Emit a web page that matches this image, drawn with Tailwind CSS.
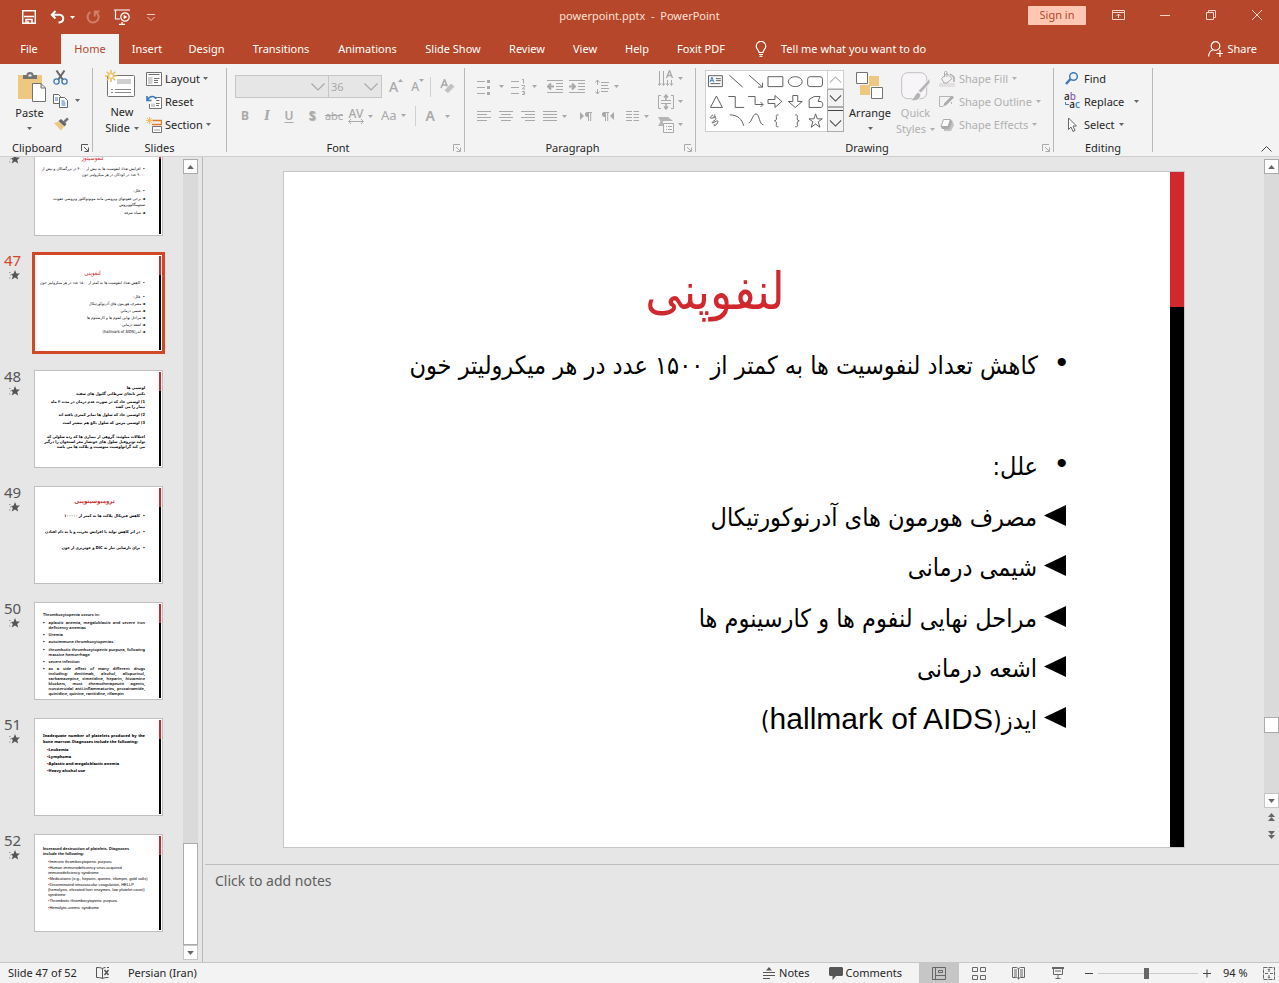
<!DOCTYPE html>
<html lang="en">
<head>
<meta charset="utf-8">
<title>powerpoint.pptx - PowerPoint</title>
<script src="https://cdn.jsdelivr.net/npm/@tailwindcss/browser@4"></script>
</head>
<body class="h-screen flex flex-col overflow-hidden bg-[#e6e6e6] font-['Noto_Sans','Open_Sans',sans-serif] text-[11px] leading-4 text-[#262626]">
<svg class="hidden" aria-hidden="true">
  <symbol id="caret" viewBox="0 0 5 3"><path d="M0 0h5L2.5 3z" fill="currentColor"/></symbol>
  <symbol id="launch" viewBox="0 0 8 8"><path d="M.5 7V.5H7M3 3l4 4M7.500 3.500v4h-4" fill="none" stroke="currentColor"/></symbol>
  <symbol id="chev" viewBox="0 0 14 8"><path d="M.5.500 7 7 13.500.500" fill="none" stroke="currentColor" stroke-width="1.200"/></symbol>
  <symbol id="star" viewBox="0 0 11 10"><path d="M6 0l1.400 3.500 3.600.1-2.800 2.300 1 3.700L6 7.500 2.800 9.600l1-3.700L2 4.200l2.700-.6z" fill="currentColor"/><path d="M0 2.500h1.500M1 5h1M0 8h1.500" stroke="#999"/></symbol>
</svg>

<header class="bg-[#b7472a] text-white shrink-0">
  <div class="h-[34px] grid grid-cols-[1fr_auto_1fr] items-center">
    <div class="flex items-center pl-[22px]">
      <button aria-label="Save" class="mr-[14px]"><svg class="w-[14px] h-[14px]" viewBox="0 0 14 14" fill="none" stroke="#fff" stroke-width="1.500"><path d="M.7.700h12.600v12.600H.7zM2 6.500h10M4 13.500V9.500h6v4"/><path d="M6 11v2.500" /></svg></button>
      <button aria-label="Undo" class="mr-[5px]"><svg class="w-[15px] h-[14px]" viewBox="0 0 15 14" fill="none" stroke="#fff" stroke-width="2"><path d="M5.500 1 1.800 4.800l3.700 3.700M2 4.800h7.500c5 0 5.300 7.700-1 7.700"/></svg></button>
      <button aria-label="Undo options" class="mr-[11px]"><svg class="w-[5px] h-[3px]"><use href="#caret"/></svg></button>
      <button aria-label="Repeat" disabled class="mr-[14px]"><svg class="w-[14px] h-[14px]" viewBox="0 0 14 14" fill="none" stroke="#cf7f6a" stroke-width="2"><path d="M4.500 2.200A5.500 5.500 0 1 0 9.500 2.100M8.800 6.500V1.500H13.500"/></svg></button>
      <button aria-label="Start from beginning" class="mr-[17px]"><svg class="w-4 h-4" viewBox="0 0 16 16" fill="none" stroke="#fff" stroke-width="1.200"><path d="M0 1h16M1.500 1v9H6M5 15.400h6M8 13v2"/><circle cx="11" cy="8" r="4.200"/><path d="M9.700 5.800v4.400L13.200 8z" fill="#fff" stroke="none"/></svg></button>
      <button aria-label="Customize quick access"><svg class="w-2 h-[7px]" viewBox="0 0 8 7" fill="none" stroke="#f0cabf"><path d="M0 .5h8M.5 3 4 6.500 7.500 3"/></svg></button>
    </div>
    <h1 class="text-[#fbe0d8] whitespace-pre pb-[2px]">powerpoint.pptx  -  PowerPoint</h1>
    <div class="flex items-center justify-end pr-[17px] pb-1 text-[#fcd9ce]">
      <button class="w-[58px] h-[19px] bg-[#ffc8b5] text-[#b7472a] rounded-[1px] mr-[26px]">Sign in</button>
      <button aria-label="Ribbon display options" class="mr-[35px]"><svg class="w-[13px] h-[10px]" viewBox="0 0 13 10" fill="none" stroke="currentColor"><path d="M.5.500h12v9H.5zM.5 2.500h12M6.500 8V4M4.500 6l2-2 2 2"/></svg></button>
      <button aria-label="Minimize" class="mr-9"><svg class="w-[10px] h-[10px]" viewBox="0 0 10 10" stroke="currentColor"><path d="M0 5.500h10"/></svg></button>
      <button aria-label="Restore" class="mr-9"><svg class="w-[10px] h-[10px]" viewBox="0 0 10 10" fill="none" stroke="currentColor"><path d="M.5 2.500h7v7h-7zM2.500 2.500v-2h7v7h-2"/></svg></button>
      <button aria-label="Close"><svg class="w-[10px] h-[10px]" viewBox="0 0 10 10" stroke="currentColor"><path d="M0 0l10 10M10 0 0 10"/></svg></button>
    </div>
  </div>
  <nav class="h-[30px] flex">
    <button class="w-[58px] mr-[3px]">File</button>
    <button class="w-[58px] bg-[#f3f3f3] text-[#b7472a]">Home</button>
    <button class="w-14">Insert</button>
    <button class="w-[63px]">Design</button>
    <button class="w-[86px]">Transitions</button>
    <button class="w-[87px]">Animations</button>
    <button class="w-[84px]">Slide Show</button>
    <button class="w-16">Review</button>
    <button class="w-[52px]">View</button>
    <button class="w-[52px]">Help</button>
    <button class="w-[76px]">Foxit PDF</button>
    <button class="flex items-center gap-[14px] pl-4"><svg class="w-3 h-4" viewBox="0 0 12 16" fill="none" stroke="#fff" stroke-width="1.200"><path d="M4 11.500C4 9 1.200 8 1.200 5.200a4.800 4.800 0 0 1 9.600 0C10.800 8 8 9 8 11.500zM4 13.500h4M4.500 15.300h3"/></svg><span>Tell me what you want to do</span></button>
    <button class="ml-auto mr-[22px] flex items-center gap-1"><svg class="w-[15px] h-4" viewBox="0 0 15 16" fill="none" stroke="#fff" stroke-width="1.200"><circle cx="7.500" cy="5" r="4.300"/><path d="M.7 15.500C.7 11.500 3 9.500 5 8.800M12 9v7M8.500 12.500H15"/></svg>Share</button>
  </nav>
</header>

<section aria-label="Ribbon" class="h-[93px] shrink-0 bg-[#f3f3f3] border-b border-[#cfcfcf] flex pt-1 pb-1">
  <!-- Clipboard -->
  <div class="w-[93px] border-r border-[#b8b8b8] flex flex-col justify-between">
    <div class="flex pl-[14px]">
      <button class="w-[31px] flex flex-col items-center pt-1"><svg class="w-7 h-[31px] ml-1" viewBox="0 0 28 31"><path d="M0 3h24v24H0z" fill="#eec880"/><path d="M5 7V3h3.500a3.500 3 0 0 1 7 0H19v4z" fill="#737373"/><path d="M10.500 2.500h3v2h-3z" fill="#f3f3f3"/><path d="M14.500 11.500h8.500l4.500 4.500v13.500h-13zM23 11.500V16h4.500" fill="#fff" stroke="#737373"/></svg><span class="pt-[2px] leading-4">Paste</span><svg class="w-[5px] h-[3px] mt-[6px] text-[#666]"><use href="#caret"/></svg></button>
      <div class="pl-[8px] flex flex-col text-[#666]">
        <button aria-label="Cut" class="h-[23px] mt-[-2px]"><svg class="w-[15px] h-[15px]" viewBox="0 0 15 15" fill="none"><path d="M3.500.500 10 10M11.500.500 5 10" stroke="#666" stroke-width="2"/><circle cx="3.500" cy="11.500" r="2.600" stroke="#3f7ab8" stroke-width="1.300"/><circle cx="11.500" cy="11.500" r="2.600" stroke="#3f7ab8" stroke-width="1.300"/></svg></button>
        <button aria-label="Copy" class="h-[23px] flex items-center gap-[7px]"><svg class="w-[15px] h-[14px]" viewBox="0 0 15 14" fill="#fff" stroke="#666"><path d="M.5.500h5l2 2v7h-7z"/><path d="M6.500 3.500h5l3 3v7h-8z"/><path d="M2 4h3M2 6h3M8.500 7h3M8.500 9h4M8.500 11h4" stroke="#3f7ab8"/></svg><svg class="w-[5px] h-[3px]"><use href="#caret"/></svg></button>
        <button aria-label="Format painter" class="h-[23px] flex items-center"><svg class="w-4 h-[14px]" viewBox="0 0 16 14"><path d="M1 6l5-1.500 5 5L8 13.500z" fill="#eec880"/><path d="M5.500 4 8 2l5.500 5-2 2.500z" fill="#666"/><path d="M10 4.500l4-4L15.800 2.200l-4 4z" fill="#737373"/></svg></button>
      </div>
    </div>
    <div class="flex items-center h-2 leading-2 pl-3 pr-[3px] justify-between"><span>Clipboard</span><button aria-label="Clipboard options" class="text-[#555]"><svg class="w-2 h-2"><use href="#launch"/></svg></button></div>
  </div>
  <!-- Slides -->
  <div class="w-[134px] border-r border-[#b8b8b8] flex flex-col justify-between">
    <div class="flex pl-[11px]">
      <button class="w-9 flex flex-col items-center pt-[2px]"><svg class="w-[31px] h-7 mr-1" viewBox="0 0 31 28"><rect x="2.500" y="5.500" width="27" height="21" rx="1" fill="#fff" stroke="#737373"/><path d="M12 9h14v5H12z" fill="#d0d0d0"/><path d="M6 19.500h2M10 19.500h16M6 22.500h2M10 22.500h16" stroke="#8a8a8a"/><path d="M6 0v12M0 6h12M1.700 1.700l8.600 8.600M10.300 1.700l-8.600 8.600" stroke="#eec060" stroke-width="1.600"/><circle cx="6" cy="6" r="2.200" fill="#fff" stroke="#eec060"/></svg><span class="mt-[6px] leading-4">New</span><span class="leading-4 flex items-center gap-1 whitespace-nowrap">Slide <svg class="w-[5px] h-[3px] text-[#666]"><use href="#caret"/></svg></span></button>
      <div class="pl-[6px] flex flex-col">
        <button class="h-[23px] mt-[-1px] flex items-center gap-[3px]"><svg class="w-4 h-[14px]" viewBox="0 0 16 14" fill="none" stroke="#737373"><path fill="#fff" d="M.5.500h15v13H.5z"/><path d="M2.500 2.500h11M8 6.500h5.500M8 8.500h4M8 10.500h4"/><path d="M2 5h4.500v7H2z" fill="#d0d0d0" stroke="none"/></svg>Layout<svg class="w-[5px] h-[3px] text-[#666]"><use href="#caret"/></svg></button>
        <button class="h-[23px] flex items-center gap-[3px]"><svg class="w-4 h-[14px]" viewBox="0 0 16 14" fill="none" stroke="#737373"><path d="M9 2.500h6.500v11h-12V9" fill="#fff"/><path d="M10 5.500h3.500M10 8.500h3.500M10 10.500h3"/><path d="M5 8.500h4V12H5z" fill="#d0d0d0" stroke="none"/><path d="M1 1v4.500h4.500M1.500 5C4 .5 8.500.500 10 4" stroke="#3f7ab8" stroke-width="1.700"/></svg>Reset</button>
        <button class="h-[23px] flex items-center gap-[3px]"><svg class="w-4 h-4" viewBox="0 0 16 16" fill="none"><path d="M6 3.500h9.500v4H6" stroke="#e07b28" stroke-width="1.300"/><path d="M6.500 9.500h9v6h-9z" fill="#fff" stroke="#737373"/><path d="M8 12h6v2H8z" fill="#d0d0d0"/><path d="M3.500 0v7M0 3.500h7M1 1l5 5M6 1 1 6" stroke="#eec060"/></svg>Section<svg class="w-[5px] h-[3px] text-[#666]"><use href="#caret"/></svg></button>
      </div>
    </div>
    <div class="h-2 leading-2 text-center">Slides</div>
  </div>
  <!-- Font -->
  <div class="w-[238px] border-r border-[#b8b8b8] flex flex-col justify-between text-[#a9a9a9]">
    <div class="pt-[7px] pl-2">
      <div class="h-[23px] flex items-center">
        <div class="relative w-[94px] h-[23px]"><select aria-label="Font" disabled class="appearance-none w-full h-full border border-[#c6c6c6] bg-[#e6e6e6]"><option></option></select><svg class="absolute right-1 top-2 w-[14px] h-2 pointer-events-none"><use href="#chev"/></svg></div>
        <div class="relative w-[54px] h-[23px] -ml-px"><select aria-label="Font size" disabled class="appearance-none w-full h-full border border-[#c6c6c6] bg-[#e6e6e6] text-[11px] px-[2px] opacity-100"><option>36</option></select><svg class="absolute right-1 top-2 w-[14px] h-2 pointer-events-none"><use href="#chev"/></svg></div>
        <button aria-label="Increase font size" disabled class="flex ml-[7px] text-sm font-medium">A<svg class="w-[5px] h-[3px] rotate-180 mt-[2px]"><use href="#caret"/></svg></button>
        <button aria-label="Decrease font size" disabled class="flex ml-[8px] text-xs font-medium">A<svg class="w-[5px] h-[3px] mt-0"><use href="#caret"/></svg></button>
        <span class="w-px h-5 bg-[#d0d0d0] ml-[6px]"></span>
        <button aria-label="Clear formatting" disabled class="ml-[9px]"><svg class="w-4 h-4" viewBox="0 0 16 16"><path d="M1 9 4.500.500 8 9M2 6h5" fill="none" stroke="#a9a9a9" stroke-width="1.500"/><path d="M4 11.500 11 4l4 3.500-7 7z" fill="#c4bfc2" stroke="#f3f3f3"/></svg></button>
      </div>
      <div class="h-[22px] mt-[7px] flex items-center text-xs -ml-px">
        <button disabled class="w-[22px] font-bold">B</button>
        <button disabled class="w-[22px] italic font-semibold font-['DejaVu_Serif',serif]">I</button>
        <button disabled class="w-[22px] font-semibold underline underline-offset-2">U</button>
        <button disabled class="w-6 font-bold [text-shadow:1px_1px_1px_#aaa]">S</button>
        <button disabled class="w-[20px] line-through text-[11px]">abc</button>
        <button disabled class="flex items-center gap-1 ml-[4px]"><span class="flex flex-col items-center leading-[10px] font-medium">AV<svg class="w-4 h-[5px]" viewBox="0 0 16 5" fill="none" stroke="currentColor"><path d="M1 2.500h14M3 0 .7 2.500 3 5M13 0l2.300 2.500L13 5"/></svg></span><svg class="w-[5px] h-[3px]"><use href="#caret"/></svg></button>
        <button disabled class="flex items-center gap-1 ml-2 text-[13px]">Aa<svg class="w-[5px] h-[3px]"><use href="#caret"/></svg></button>
        <span class="w-px h-5 bg-[#d0d0d0] ml-[9px]"></span>
        <button disabled class="flex items-center gap-[10px] ml-[10px] text-sm font-semibold">A<svg class="w-[5px] h-[3px]"><use href="#caret"/></svg></button>
      </div>
    </div>
    <div class="flex items-center h-2 leading-2 pr-[3px]"><span class="flex-1 text-center text-[#262626] pr-1">Font</span><button aria-label="Font options"><svg class="w-2 h-2"><use href="#launch"/></svg></button></div>
  </div>
  <!-- Paragraph -->
  <div class="w-[231px] border-r border-[#b8b8b8] flex flex-col justify-between text-[#a9a9a9]">
    <div class="flex justify-between pl-3 pr-3">
      <div class="pt-[7px]">
        <div class="h-[23px] flex items-center">
          <button disabled aria-label="Bullets" class="flex items-center gap-2"><svg class="w-[14px] h-4" viewBox="0 0 14 16" stroke="currentColor"><path d="M0 2.500h8M0 8.500h8M0 14.500h8"/><path d="M10 2.500h3M10 8.500h3M10 14.500h3" stroke-width="3"/></svg><svg class="w-[5px] h-[3px]"><use href="#caret"/></svg></button>
          <button disabled aria-label="Numbering" class="flex items-center gap-[6px] ml-[7px]"><svg class="w-[15px] h-4" viewBox="0 0 15 16" stroke="currentColor" fill="none"><path d="M0 2.500h8M0 8.500h8M0 14.500h8M11 .5h1.500v4M10.500 6.500h3v1.500l-2 1.500v.5h2.500M11 12.500h2.500v3H11M12 14h1.500"/></svg><svg class="w-[5px] h-[3px]"><use href="#caret"/></svg></button>
          <button disabled aria-label="Decrease indent" class="ml-[10px]"><svg class="w-4 h-[14px]" viewBox="0 0 16 14" stroke="currentColor" fill="none"><path d="M0 .5h16M9 3.500h7M9 6.500h7M9 9.500h7M0 12.500h16"/><path d="M7 6.500H1M4 3.500 1 6.500l3 3" stroke-width="2"/></svg></button>
          <button disabled aria-label="Increase indent" class="ml-[6px]"><svg class="w-4 h-[14px]" viewBox="0 0 16 14" stroke="currentColor" fill="none"><path d="M0 .5h16M9 3.500h7M9 6.500h7M9 9.500h7M0 12.500h16"/><path d="M0 6.500h6M3 3.500l3 3-3 3" stroke-width="2"/></svg></button>
          <button disabled aria-label="Line spacing" class="flex items-center gap-[5px] ml-[10px]"><svg class="w-[14px] h-4" viewBox="0 0 14 16" stroke="currentColor" fill="none"><path d="M2.500 1v5M.5 3.500l2-2.500 2 2.500M2.500 10v5M.5 12.500l2 2.500 2-2.500M6 3.500h8M6 6.500h7M6 9.500h8M6 12.500h7"/></svg><svg class="w-[5px] h-[3px]"><use href="#caret"/></svg></button>
        </div>
        <div class="h-[22px] mt-[7px] flex items-center">
          <button disabled aria-label="Align left"><svg class="w-[14px] h-[10px]" viewBox="0 0 14 10" stroke="currentColor"><path d="M0 .5h14M0 3.500h10M0 6.500h14M0 9.500h10"/></svg></button>
          <button disabled aria-label="Center" class="ml-2"><svg class="w-[14px] h-[10px]" viewBox="0 0 14 10" stroke="currentColor"><path d="M0 .5h14M2 3.500h10M0 6.500h14M2 9.500h10"/></svg></button>
          <button disabled aria-label="Align right" class="ml-2"><svg class="w-[14px] h-[10px]" viewBox="0 0 14 10" stroke="currentColor"><path d="M0 .5h14M4 3.500h10M0 6.500h14M4 9.500h10"/></svg></button>
          <button disabled aria-label="Justify" class="ml-2 flex items-center gap-[5px]"><svg class="w-[14px] h-[10px]" viewBox="0 0 14 10" stroke="currentColor"><path d="M0 .5h14M0 3.500h14M0 6.500h14M0 9.500h14"/></svg><svg class="w-[5px] h-[3px]"><use href="#caret"/></svg></button>
          <button disabled aria-label="Left to right" class="ml-[13px]"><svg class="w-3 h-[9px]" viewBox="0 0 12 9" fill="currentColor"><path d="M0 0v8l4-4zM7 0h5v1h-.8v8h-1V1H9v8H8V5a2.500 2.500 0 0 1-1-5z"/></svg></button>
          <button disabled aria-label="Right to left" class="ml-[10px]"><svg class="w-3 h-[9px]" viewBox="0 0 12 9" fill="currentColor"><path d="M12 0v8L8 4zM2 0h5v1h-.8v8h-1V1H4v8H3V5a2.500 2.500 0 0 1-1-5z"/></svg></button>
          <button disabled aria-label="Columns" class="ml-3 flex items-center gap-[5px]"><svg class="w-[13px] h-[10px]" viewBox="0 0 13 10" stroke="currentColor"><path d="M0 .5h6M0 3.500h6M0 6.500h6M0 9.500h6M7.500.500h5.500M7.500 3.500h5.500M7.500 6.500h5.500M7.500 9.500h5.500"/></svg><svg class="w-[5px] h-[3px]"><use href="#caret"/></svg></button>
        </div>
      </div>
      <div class="flex flex-col">
        <button disabled aria-label="Text direction" class="h-[23px] mt-[-1px] flex items-center gap-1"><svg class="w-4 h-[17px]" viewBox="0 0 16 17" stroke="currentColor" fill="none"><path d="M1.500 1v14M5.500 1v14M9.500 10v5M13.500 10v5M0 13.500 1.500 15.500 3 13.500M4 13.500l1.500 2 1.500-2M8 13.500l1.500 2 1.500-2M12 13.500l1.500 2 1.500-2"/><path d="M8.500 8 11.500.500l3 7.500M9.500 5.500h4" stroke-width="1.300"/></svg><svg class="w-[5px] h-[3px]"><use href="#caret"/></svg></button>
        <button disabled aria-label="Align text" class="h-[23px] flex items-center gap-1"><svg class="w-4 h-4" viewBox="0 0 16 16" stroke="currentColor" fill="none"><path d="M3 1.500H.5v13H3M13 1.500h2.500v13H13M3 6.500h10M3 9.500h10"/><path d="M8 1v5M8 10v5M6 3.500 8 1l2 2.500M6 12.500 8 15l2-2.500" stroke-width="1.500"/></svg><svg class="w-[5px] h-[3px]"><use href="#caret"/></svg></button>
        <button disabled aria-label="Convert to SmartArt" class="h-[23px] flex items-center gap-1"><svg class="w-4 h-4" viewBox="0 0 16 16"><path d="M0 0h10l5 4H5v5L0 9l2.500-4.500z" fill="#b5b5b5"/><path d="M5.500 6.500h10v9h-10z" fill="#f8f5f8" stroke="#a9a9a9"/><path d="M8 9.500h1M10 9.500h4M8 12.500h1M10 12.500h4" stroke="#a9a9a9"/></svg><svg class="w-[5px] h-[3px]"><use href="#caret"/></svg></button>
      </div>
    </div>
    <div class="flex items-center h-2 leading-2 pr-[3px]"><span class="flex-1 text-center text-[#262626] pr-1">Paragraph</span><button aria-label="Paragraph options"><svg class="w-2 h-2"><use href="#launch"/></svg></button></div>
  </div>
  <!-- Drawing -->
  <div class="w-[358px] border-r border-[#b8b8b8] flex flex-col justify-between">
    <div class="flex pl-[9px] pt-[2px]">
      <div class="w-[139px] h-[62px] flex border border-[#cfcfcf] bg-white">
        <svg class="flex-1 h-[60px]" viewBox="0 0 122 60" fill="none" stroke="#606060" role="img" aria-label="Shapes">
          <path d="M2.500 4.500h14v11h-14zM10 7.500h5M10 9.500h5M4.500 12.500h10"/><path d="M4 11 6 6l2 5M5 9.500h2" stroke="#3f7ab8"/>
          <path d="M23.500 4 37 16M43.500 4 57 16M57 11.500V16h-4.500"/><path d="M62.500 5.500h15v10h-15z"/><ellipse cx="90" cy="10.500" rx="7" ry="5"/><rect x="102.500" y="5.500" width="15" height="10" rx="2.500"/>
          <path d="M10.500 25 16.500 36.500h-12zM22.500 25.500h7v11h9M42.500 25.500h7v8h8M55 31l2.500 2.500L55 36M62.500 28.500h7v-4l7 6-7 6v-4h-7zM87.500 24.500h5v6h4.500l-7 6-7-6h4.500zM104 28.500l5-3h6l-2 5h3c2.500 1 2 6 0 6h-12z"/>
          <path d="M7 44c-3 2-4 4 0 3s4 1 1 3-2 3 1 1 4-1 2 2-4 2-2 0M9 43.500c-2 3 0 3 1 2M24 44c8 0 12 4 14 11M43 52c3 0 4-9 7.500-9s3 11 7.500 11M73 44c-3 0-2 1-2 3s0 2.500-2 3c2 .5 2 1 2 3s-1 3 2 3M90 44c3 0 2 1 2 3s0 2.500 2 3c-2 .5-2 1-2 3s1 3-2 3M110.500 43l1.700 5h5l-4 3 1.700 5.500-4.400-3.300-4.400 3.300 1.700-5.500-4-3h5z"/>
        </svg>
        <div class="w-[17px] -my-px -mr-px flex flex-col text-[#444]">
          <button aria-label="Scroll up" class="flex-1 border border-[#cfcfcf] flex items-center justify-center text-[#b5b5b5]"><svg class="w-[13px] h-[7px] rotate-180" viewBox="0 0 14 8"><use href="#chev"/></svg></button>
          <button aria-label="Scroll down" class="flex-1 border border-[#ababab] bg-[#f3f3f3] flex items-center justify-center"><svg class="w-[13px] h-[7px]" viewBox="0 0 14 8"><use href="#chev"/></svg></button>
          <button aria-label="More shapes" class="flex-1 border border-[#ababab] bg-[#f3f3f3] flex flex-col items-center justify-between pt-[2px] pb-1"><span class="w-[15px] h-px bg-[#444]"></span><svg class="w-[13px] h-[7px]" viewBox="0 0 14 8"><use href="#chev"/></svg></button>
        </div>
      </div>
      <button class="w-[52px] flex flex-col items-center"><svg class="w-7 h-7 mt-[2px]" viewBox="0 0 28 28"><path d="M13 4h10v10H13zM4 13h10v10H4z" fill="#eec880"/><path d="M.5.500h11v11H.5zM15.500 15.500h11v11h-11z" fill="#fff" stroke="#737373"/></svg><span class="mt-[5px] leading-4">Arrange</span><svg class="w-[5px] h-[3px] mt-[6px] text-[#666]"><use href="#caret"/></svg></button>
      <button disabled class="w-[39px] flex flex-col items-center text-[#b0b0b0]"><svg class="w-[30px] h-[30px] mt-[2px]" viewBox="0 0 30 30"><rect x=".7" y=".7" width="25" height="26" rx="6" fill="#f8f5f8" stroke="#c0c0c0"/><path d="M29 6v5l-9 10-3-2zM17 20l3 2.500c-1 6-6 7-11 6 4-1 4-6 8-8.500z" fill="#b5b5b5" stroke="#f3f3f3"/></svg><span class="mt-[3px] leading-4">Quick</span><span class="leading-4 flex items-center gap-1">Styles<svg class="w-[5px] h-[3px]"><use href="#caret"/></svg></span></button>
      <div class="flex flex-col pl-[4px] -mt-[2px] text-[#b0b0b0]">
        <button disabled class="h-[23px] mt-[-1px] flex items-center gap-1"><svg class="w-4 h-4" viewBox="0 0 16 16"><path d="M0 12h16v4H0z" fill="#e2e0e2"/><path d="M2.500 7.500 8 2.500l5 5-5 4.500H5zM5.500 6V1.500c0-1.500 2.500-1.500 2.500 0V6" fill="none" stroke="#aaa"/><path d="M11 3l4 3v5" fill="none" stroke="#aaa" stroke-width="1.500"/></svg>Shape Fill<svg class="w-[5px] h-[3px]"><use href="#caret"/></svg></button>
        <button disabled class="h-[23px] flex items-center gap-1"><svg class="w-4 h-4" viewBox="0 0 16 16"><path d="M12 2.500H.5v10H4M12.500 8v2" fill="none" stroke="#b5b5b5"/><path d="M4 12.500 5.500 9 13 1.500l2 2L7.500 11z" fill="#aaa"/></svg>Shape Outline<svg class="w-[5px] h-[3px]"><use href="#caret"/></svg></button>
        <button disabled class="h-[23px] flex items-center gap-1"><svg class="w-4 h-4" viewBox="0 0 16 16"><path d="M5 14h7l3-6-2-5-8 0z" fill="#c2c2c2"/><path d="M4.500 2.500h7l-2.500 7H2z" fill="#fff" stroke="#aaa"/><path d="M2 9.500h7l2.500-7 1.500 3-3 6.500H3z" fill="#aaa"/></svg>Shape Effects<svg class="w-[5px] h-[3px]"><use href="#caret"/></svg></button>
      </div>
    </div>
    <div class="flex items-center h-2 leading-2 pr-[3px]"><span class="flex-1 text-center pr-1">Drawing</span><button aria-label="Drawing options" class="text-[#a9a9a9]"><svg class="w-2 h-2"><use href="#launch"/></svg></button></div>
  </div>
  <!-- Editing -->
  <div class="w-[99px] border-r border-[#b8b8b8] flex flex-col justify-between">
    <div class="flex flex-col pl-[10px]">
      <button class="h-[23px] mt-[-1px] flex items-center gap-1"><svg class="w-4 h-[14px]" viewBox="0 0 16 14" fill="none" stroke="#3f7ab8"><circle cx="9.500" cy="4.500" r="3.800" stroke-width="1.500"/><path d="M6.500 7 2 12" stroke-width="2.500"/></svg>Find</button>
      <button class="h-[23px] flex items-center gap-1"><span class="w-4 text-[10px] leading-2 flex flex-col font-medium pb-1"><span class="text-left">a<span class="text-[#8a5fa8]">b</span></span><span class="flex items-center justify-end"><svg class="w-[4px] h-[4px]" viewBox="0 0 4 4" fill="none" stroke="#3f7ab8"><path d="M.5 0v2.500H4"/></svg>a<span class="text-[#3f7ab8]">c</span></span></span>Replace<svg class="w-[5px] h-[3px] ml-[6px] text-[#666]"><use href="#caret"/></svg></button>
      <button class="h-[23px] flex items-center gap-1"><svg class="w-4 h-4" viewBox="0 0 16 16" fill="#fff" stroke="#666"><path d="M4.500 1v11.500L7 10l2 4.500 2-1L9 9h3.500z"/></svg>Select<svg class="w-[5px] h-[3px] text-[#666]"><use href="#caret"/></svg></button>
    </div>
    <div class="h-2 leading-2 text-center">Editing</div>
  </div>
  <button aria-label="Collapse ribbon" class="ml-auto mr-[7px] self-end text-[#444]"><svg class="w-[11px] h-[6px]" viewBox="0 0 11 6" fill="none" stroke="currentColor"><path d="M.5 5.500l5-5 5 5"/></svg></button>
</section>

<main class="flex-1 min-h-0 flex">
  <!-- Slide thumbnails -->
  <aside aria-label="Slides" class="w-[203px] shrink-0 border-r border-[#b8b8b8] flex">
    <ol class="w-[183px] min-h-0 overflow-hidden flex flex-col justify-end gap-[18px] pb-[30px] text-[15px] text-[#555]">
      <li class="h-[98px] shrink-0 flex pl-1"><div class="w-[30px] flex flex-col"><svg aria-label="Slide 46 has animation" class="w-[11px] h-[10px] ml-[5px] mt-4"><use href="#star"/></svg></div>
        <button aria-label="Slide 46" class="w-[129px] h-[98px] bg-white border border-[#c0c0c0] flex p-px"><span dir="rtl" class="flex-1 h-full flex flex-col pr-[14px] pl-1 pt-[15px] text-right text-[4px] leading-[6px] text-black font-['DejaVu_Sans_Condensed',sans-serif]"><span class="text-center text-[6px] text-[#d1282e]">لنفوسیتوز</span><span class="mt-[5px]">•&nbsp; افزایش تعداد لنفوسیت ها به بیش از ۴۰۰۰ در بزرگسالان و بیش از ۹۰۰۰ عدد در کودکان در هر میکرولیتر خون</span><span class="mt-[10px]">•&nbsp; علل:</span><span class="mt-[2px]">◄ برخی عفونتهای ویروسی مانند مونونوکلئوز ویروسی عفونت سیتومگالوویروس</span><span class="mt-[2px]">◄ سیاه سرفه</span></span><span class="ml-auto w-[2px] h-full flex flex-col bg-black"><i class="h-1/5 bg-[#d1282e]"></i></span></button></li>
      <li class="h-[98px] shrink-0 flex pl-1"><div class="w-[30px] flex flex-col"><span class="leading-3 text-[#d24726]">47</span><svg class="w-[11px] h-[10px] ml-[5px] mt-1"><use href="#star"/></svg></div>
        <button aria-current="true" class="w-[129px] h-[98px] bg-white outline-3 outline-[#d24726] -outline-offset-1 flex p-[2px]"><span dir="rtl" class="flex-1 h-full flex flex-col pr-[14px] pl-1 pt-[13px] text-right text-[4px] leading-[7px] text-black font-['DejaVu_Sans_Condensed',sans-serif]"><span class="text-center text-[6px] text-[#d1282e]">لنفوپنی</span><span class="mt-[3px] whitespace-nowrap">•&nbsp; کاهش تعداد لنفوسیت ها به کمتر از ۱۵۰۰ عدد در هر میکرولیتر خون</span><span class="mt-[7px]">•&nbsp; علل:</span><span>◄ مصرف هورمون های آدرنوکورتیکال</span><span>◄ شیمی درمانی</span><span>◄ مراحل نهایی لنفوم ها و کارسینوم ها</span><span>◄ اشعه درمانی</span><span>◄ ایدز(hallmark of AIDS)</span></span><span class="ml-auto w-[2px] h-full flex flex-col bg-black"><i class="h-1/5 bg-[#d1282e]"></i></span></button></li>
      <li class="h-[98px] shrink-0 flex pl-1"><div class="w-[30px] flex flex-col"><span class="leading-3">48</span><svg class="w-[11px] h-[10px] ml-[5px] mt-1"><use href="#star"/></svg></div>
        <button class="w-[129px] h-[98px] bg-white border border-[#c0c0c0] flex p-px"><span dir="rtl" class="flex-1 h-full flex flex-col pr-[14px] pl-[6px] pt-[12px] text-right text-[4px] leading-[5px] font-bold text-black font-['DejaVu_Sans_Condensed',sans-serif]"><span class="leading-[7px]">لوسمی ها</span><span>تکثیر نابجای سرطانی گلبول های سفید</span><span class="mt-[3px]">1) لوسمی حاد که در صورت عدم درمان در مدت ۳ ماه بیمار را می کشد</span><span class="mt-[3px] whitespace-nowrap">2) لوسمی حاد که سلول ها تمایز کمتری یافته اند</span><span class="mt-[3px] whitespace-nowrap">3) لوسمی مزمن که سلول بالغ هم بیشتر است</span><span class="mt-[9px]">اختلالات میلوئید: گروهی از بیماری ها که رده سلولی که تولید نوتروفیل سلول های خونساز مغز استخوان را درگیر می کند گرانولوسیت منوسیت و پلاکت ها می باشد</span></span><span class="ml-auto w-[2px] h-full flex flex-col bg-black"><i class="h-1/5 bg-[#d1282e]"></i></span></button></li>
      <li class="h-[98px] shrink-0 flex pl-1"><div class="w-[30px] flex flex-col"><span class="leading-3">49</span><svg class="w-[11px] h-[10px] ml-[5px] mt-1"><use href="#star"/></svg></div>
        <button class="w-[129px] h-[98px] bg-white border border-[#c0c0c0] flex p-px"><span dir="rtl" class="flex-1 h-full flex flex-col pr-[14px] pl-2 pt-[10px] text-right text-[4px] leading-[6px] font-bold text-black font-['DejaVu_Sans_Condensed',sans-serif]"><span class="text-center text-[6px] text-[#d1282e]">ترومبوسیتوپنی</span><span class="mt-[9px] whitespace-nowrap">•&nbsp; کاهش فیزیکال پلاکت ها به کمتر از ۱۰۰۰۰۰</span><span class="mt-[10px] whitespace-nowrap">•&nbsp; در اثر کاهش تولید یا افزایش تخریب و یا به دام افتادن</span><span class="mt-[10px] whitespace-nowrap">•&nbsp; برای نارسایی نیاز به DIC و خونریزی از خون</span></span><span class="ml-auto w-[2px] h-full flex flex-col bg-black"><i class="h-1/5 bg-[#d1282e]"></i></span></button></li>
      <li class="h-[98px] shrink-0 flex pl-1"><div class="w-[30px] flex flex-col"><span class="leading-3">50</span><svg class="w-[11px] h-[10px] ml-[5px] mt-1"><use href="#star"/></svg></div>
        <button class="w-[129px] h-[98px] bg-white border border-[#c0c0c0] flex p-px"><span class="flex-1 h-full flex flex-col pl-[7px] pr-[14px] pt-[8px] text-left text-[4px] leading-[5px] font-semibold text-black"><span>Thrombocytopenia occurs in:</span><span class="mt-[3px] flex gap-1"><b>•</b><span class="text-justify">aplastic anemia, megaloblastic and severe iron deficiency anemias</span></span><span class="mt-[2px] flex gap-1"><b>•</b>Uremia</span><span class="mt-[2px] flex gap-1"><b>•</b>autoimmune thrombocytopenias</span><span class="mt-[3px] flex gap-1"><b>•</b><span class="text-justify">thrombotic thrombocytopenic purpura, following massive hemorrhage</span></span><span class="mt-[2px] flex gap-1"><b>•</b>severe infection</span><span class="mt-[2px] flex gap-1"><b>•</b><span class="text-justify">as a side effect of many different drugs including: decitimab, alcohol, allopurinol, carbamazepine, cimetidine, heparin, histamine blockers, most chemotherapeutic agents, nonsteroidal anti-inflammatories, procainamide, quinidine, quinine, ranitidine, rifampin</span></span></span><span class="ml-auto w-[2px] h-full flex flex-col bg-black"><i class="h-1/5 bg-[#d1282e]"></i></span></button></li>
      <li class="h-[98px] shrink-0 flex pl-1"><div class="w-[30px] flex flex-col"><span class="leading-3">51</span><svg class="w-[11px] h-[10px] ml-[5px] mt-1"><use href="#star"/></svg></div>
        <button class="w-[129px] h-[98px] bg-white border border-[#c0c0c0] flex p-px"><span class="flex-1 h-full flex flex-col pl-[7px] pr-[14px] pt-[13px] text-left text-[4px] leading-[6px] font-extrabold text-black"><span class="text-justify">Inadequate number of platelets produced by the bone marrow. Diagnoses include the following:</span><span class="mt-[2px] pl-1"><b class="text-[#d1282e]">•</b>Leukemia</span><span class="mt-[1px] pl-1"><b class="text-[#d1282e]">•</b>Lymphoma</span><span class="mt-[1px] pl-1"><b class="text-[#d1282e]">•</b>Aplastic and megaloblastic anemia</span><span class="mt-[1px] pl-1"><b class="text-[#d1282e]">•</b>Heavy alcohol use</span></span><span class="ml-auto w-[2px] h-full flex flex-col bg-black"><i class="h-1/5 bg-[#d1282e]"></i></span></button></li>
      <li class="h-[98px] shrink-0 flex pl-1"><div class="w-[30px] flex flex-col"><span class="leading-3">52</span><svg class="w-[11px] h-[10px] ml-[5px] mt-1"><use href="#star"/></svg></div>
        <button class="w-[129px] h-[98px] bg-white border border-[#c0c0c0] flex p-px"><span class="flex-1 h-full flex flex-col pl-[7px] pr-[11px] pt-[10px] text-left text-[4px] leading-[5px] text-black font-['Liberation_Sans',sans-serif]"><span class="pr-1 font-bold">Increased destruction of platelets. Diagnoses include the following:</span><span class="mt-[3px] pl-[5px]"><b class="text-[#d1282e]">•</b>Immune thrombocytopenic purpura</span><span class="mt-[1px] pl-[5px] pr-5"><b class="text-[#d1282e]">•</b>Human immunodeficiency virus-acquired immunodeficiency syndrome</span><span class="mt-[1px] pl-[5px] whitespace-nowrap"><b class="text-[#d1282e]">•</b>Medications (e.g., heparin, quinine, rifampin, gold salts)</span><span class="mt-[1px] pl-[5px]"><b class="text-[#d1282e]">•</b>Disseminated intravascular coagulation, HELLP (hemolysis, elevated liver enzymes, low platelet count) syndrome</span><span class="mt-[1px] pl-[5px]"><b class="text-[#d1282e]">•</b>Thrombotic thrombocytopenic purpura</span><span class="mt-[2px] pl-[5px]"><b class="text-[#d1282e]">•</b>Hemolytic-uremic syndrome</span></span><span class="ml-auto w-[2px] h-full flex flex-col bg-black"><i class="h-1/5 bg-[#d1282e]"></i></span></button></li>
    </ol>
    <div class="w-[15px] my-[2px] bg-[#dadada] flex flex-col text-[#666]">
      <button aria-label="Scroll up" class="h-[15px] bg-white border border-[#ababab] flex items-center justify-center"><svg class="w-[7px] h-1 rotate-180" viewBox="0 0 5 3"><use href="#caret"/></svg></button>
      <div class="flex-1"></div>
      <div class="h-[102px] bg-white border border-[#ababab]"></div>
      <button aria-label="Scroll down" class="h-[15px] bg-white border border-[#c6c6c6] flex items-center justify-center"><svg class="w-[7px] h-1"  viewBox="0 0 5 3"><use href="#caret"/></svg></button>
    </div>
  </aside>

  <div class="flex-1 min-w-0 flex flex-col pl-[2px]">
    <div class="flex-1 min-h-0 flex">
      <div class="flex-1 min-w-0 pl-[78px] pr-[77px] pt-[14px] pb-4 flex">
        <!-- Current slide -->
        <article class="flex-1 bg-white border border-[#c6c6c6] flex">
          <div dir="rtl" lang="fa" class="flex-1 pr-[104px] text-black text-[25px] font-['DejaVu_Sans_Condensed',sans-serif]">
            <h2 class="mt-[86px] h-[68px] text-[51px] leading-[68px] text-center text-[#d1282e] -mr-20">لنفوپنی</h2>
            <ul class="mt-[15px] h-[404px] flex flex-col">
              <li class="flex-1 flex items-center"><span class="w-[29px] h-[29px] leading-[20px] text-[30px] -mr-px font-['Liberation_Sans',sans-serif]">•</span>کاهش تعداد لنفوسیت ها به کمتر از ۱۵۰۰ عدد در هر میکرولیتر خون</li>
              <li class="flex-1"></li>
              <li class="flex-1 flex items-center"><span class="w-[29px] h-[29px] leading-[20px] text-[30px] -mr-px font-['Liberation_Sans',sans-serif]">•</span>علل:</li>
              <li class="flex-1 flex items-center"><svg class="w-[29px] h-[22px] mb-1" viewBox="0 0 29 22"><path d="M29 0v21L7 10.500z"/></svg>مصرف هورمون های آدرنوکورتیکال</li>
              <li class="flex-1 flex items-center"><svg class="w-[29px] h-[22px] mb-1" viewBox="0 0 29 22"><path d="M29 0v21L7 10.500z"/></svg>شیمی درمانی</li>
              <li class="flex-1 flex items-center"><svg class="w-[29px] h-[22px] mb-1" viewBox="0 0 29 22"><path d="M29 0v21L7 10.500z"/></svg>مراحل نهایی لنفوم ها و کارسینوم ها</li>
              <li class="flex-1 flex items-center"><svg class="w-[29px] h-[22px] mb-1" viewBox="0 0 29 22"><path d="M29 0v21L7 10.500z"/></svg>اشعه درمانی</li>
              <li class="flex-1 flex items-center"><svg class="w-[29px] h-[22px] mb-1" viewBox="0 0 29 22"><path d="M29 0v21L7 10.500z"/></svg><span>ایدز(<bdi class="text-[30px] font-['Liberation_Sans',sans-serif]">hallmark of AIDS</bdi>)</span></li>
            </ul>
          </div>
          <div class="w-[14px] bg-black"><div class="h-1/5 bg-[#d1282e]"></div></div>
        </article>
      </div>
      <div class="w-[15px] mt-[2px] ml-[2px] flex flex-col text-[#666]">
        <button aria-label="Previous" class="h-[15px] bg-white border border-[#ababab] flex items-center justify-center"><svg class="w-[7px] h-1 rotate-180" viewBox="0 0 5 3"><use href="#caret"/></svg></button>
        <div class="flex-[544] bg-[#dadada]"></div>
        <div class="h-4 bg-white border border-[#ababab]"></div>
        <div class="flex-[60] bg-[#dadada]"></div>
        <button aria-label="Next" class="h-[15px] bg-white border border-[#c6c6c6] flex items-center justify-center"><svg class="w-[7px] h-1"  viewBox="0 0 5 3"><use href="#caret"/></svg></button>
        <button aria-label="Previous slide" class="h-[18px] flex items-center justify-center"><svg class="w-[7px] h-2" viewBox="0 0 7 8" fill="currentColor"><path d="M0 4 3.500 0 7 4zM0 8l3.500-4L7 8z"/></svg></button>
        <button aria-label="Next slide" class="h-[18px] mb-[20px] flex items-center justify-center"><svg class="w-[7px] h-2" viewBox="0 0 7 8" fill="currentColor"><path d="M0 0h7L3.500 4zM0 4h7L3.500 8z"/></svg></button>
      </div>
    </div>
    <div class="h-[98px] shrink-0 border-t border-[#bdbdbd]"><textarea aria-label="Notes" placeholder="Click to add notes" class="block w-full h-full resize-none outline-none px-[10px] py-[6px] text-sm leading-5 placeholder:text-[#5e5e5e] bg-transparent"></textarea></div>
  </div>
</main>

<footer class="h-[21px] shrink-0 bg-[#f3f3f3] border-t border-[#c6c6c6] flex items-center pl-2 pr-1">
  <span class="pb-px">Slide 47 of 52</span>
  <button aria-label="Spelling" class="ml-[19px]"><svg class="w-[14px] h-3" viewBox="0 0 14 12" fill="none" stroke="#555"><path d="M6.500 1.500C4.500.500 2.500.500.500.500v10c2 0 4 0 6 1zM6.500 1.500c1-.7 2-1 3-1M6.500 11.500c2-1 4-1 6-1M13 .5h-2"/><path d="M8.500 3l4 5M12.500 3l-4 5" stroke-width="1.500"/></svg></button>
  <button class="ml-[18px] pb-px">Persian (Iran)</button>
  <div class="ml-auto h-full flex items-center">
    <button class="flex items-center gap-1 mr-[19px]"><svg class="w-3 h-3" viewBox="0 0 12 12" stroke="#555"><path d="M3 3.500 6 0l3 3.500z" fill="#555" stroke="none"/><path d="M0 5.500h12M0 8.500h12M0 11.500h7"/></svg>Notes</button>
    <button class="flex items-center gap-[3px] mr-[17px]"><svg class="w-[14px] h-[13px]" viewBox="0 0 14 13"><path d="M1 0h12l1 1v7l-1 1H7l-3.500 4V9H1L0 8V1z" fill="#555"/></svg>Comments</button>
    <button aria-label="Normal view" class="w-10 h-full bg-[#c6c6c6] flex items-center justify-center"><svg class="w-[14px] h-[13px]" viewBox="0 0 14 13" fill="none" stroke="#666"><path d="M.5.500h13v12H.5zM3.500.500v12M3.500 8.500h10M6.500 3.500h4v2h-4z"/></svg></button>
    <button aria-label="Slide sorter" class="w-[39px] flex justify-center"><svg class="w-[14px] h-[13px]" viewBox="0 0 14 13" fill="none" stroke="#666"><path d="M.5.500h5v4h-5zM8.500.500h5v4h-5zM.5 8.500h5v4h-5zM8.500 8.500h5v4h-5z"/></svg></button>
    <button aria-label="Reading view" class="w-10 flex justify-center"><svg class="w-[13px] h-[13px]" viewBox="0 0 13 13" fill="none" stroke="#666"><path d="M6.500 1.500v11M.5.500h4l2 1 2-1h4v10h-4l-2 1-2-1h-4zM2 3h3M2 5h3M2 7h3M2 9h3M8 3h3M8 5h3M8 7h3M8 9h3"/></svg></button>
    <button aria-label="Slide show" class="w-10 flex justify-center"><svg class="w-3 h-3" viewBox="0 0 12 12" fill="none" stroke="#666"><path d="M0 1h12" stroke-width="2"/><path d="M1.500 2v5.500h9V2M3 4h6M6 7.500v4M3.500 11.500h5"/></svg></button>
    <button aria-label="Zoom out" class="ml-[7px]"><svg class="w-2 h-[9px]" viewBox="0 0 8 9" stroke="#444"><path d="M0 4.500h8"/></svg></button>
    <input type="range" aria-label="Zoom" min="0" max="100" value="48" class="appearance-none bg-transparent w-[100px] h-[11px] mx-[5px] [&::-webkit-slider-runnable-track]:h-[11px] [&::-webkit-slider-runnable-track]:bg-linear-to-b [&::-webkit-slider-runnable-track]:from-transparent [&::-webkit-slider-runnable-track]:from-[46%] [&::-webkit-slider-runnable-track]:via-[#ababab] [&::-webkit-slider-runnable-track]:via-[46%] [&::-webkit-slider-runnable-track]:to-transparent [&::-webkit-slider-runnable-track]:to-[55%] [&::-webkit-slider-thumb]:appearance-none [&::-webkit-slider-thumb]:w-[5px] [&::-webkit-slider-thumb]:h-[11px] [&::-webkit-slider-thumb]:bg-[#666]">
    <button aria-label="Zoom in"><svg class="w-2 h-[9px]" viewBox="0 0 8 9" stroke="#444"><path d="M0 4.500h8M4 .5v8"/></svg></button>
    <button class="ml-3 w-6 whitespace-nowrap">94 %</button>
    <button aria-label="Fit slide to window" class="ml-4"><svg class="w-3 h-[13px]" viewBox="0 0 12 13" fill="none" stroke="#666"><path d="M.5.500h11v12H.5z" stroke-dasharray="4 1"/><path d="M6 2v3M6 8v3M2 6.500h3M7 6.500h3M4.800 3 6 1.800 7.200 3M4.800 10 6 11.200 7.200 10"/></svg></button>
  </div>
</footer>
</body>
</html>
